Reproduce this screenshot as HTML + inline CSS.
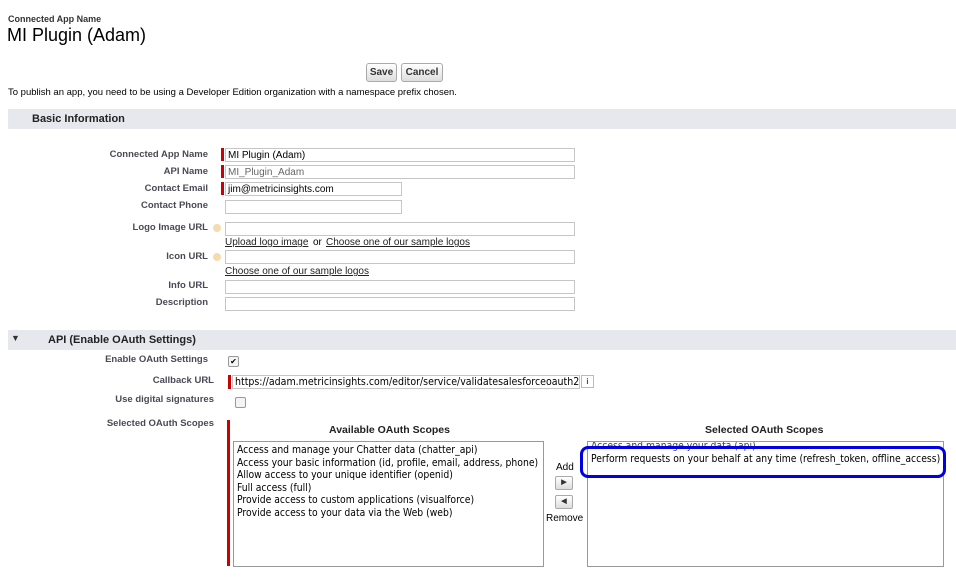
<!DOCTYPE html>
<html><head><style>
body{margin:0;width:956px;height:588px;background:#fff;font-family:"Liberation Sans",Arial,sans-serif;position:relative;overflow:hidden;color:#000}
.a{position:absolute;white-space:nowrap}
.lbl{position:absolute;font-size:9.5px;font-weight:bold;color:#4a4a56;text-align:right;white-space:nowrap}
.in{position:absolute;border:1px solid #c6c6c6;background:#fff;height:12px;font-size:10px;line-height:13px;padding-left:2px;box-sizing:content-box}
.red{position:absolute;background:#c00;width:3px}
.bar{position:absolute;left:8px;right:0;background:#e6e8ee;height:20px}
.lnk{position:absolute;font-size:10px;text-decoration:underline;color:#222;white-space:nowrap}
.btn{position:absolute;border:1px solid #aaa;border-radius:3px;background:linear-gradient(#fff,#ddd);font-size:10px;font-weight:bold;color:#333;text-align:center;line-height:17px;height:17px}
.cb{position:absolute;width:9px;height:9px;border:1px solid #999;border-radius:2px;background:#f4f4f4;font-size:8px;line-height:9px;text-align:center}
.box{position:absolute;border:1px solid #999;background:#fff;font-size:10.3px;line-height:12.6px;padding:2px 3px;box-sizing:border-box;font-family:"DejaVu Sans Condensed","Liberation Sans",sans-serif;white-space:nowrap;overflow:hidden}
.hint{position:absolute;width:8px;height:8px;border-radius:50%;background:#f3dcae}
</style></head><body>
<div class="a" style="left:8px;top:14px;font-size:9px;font-weight:bold;color:#333">Connected App Name</div>
<div class="a" style="left:7px;top:25px;font-size:18px;color:#000">MI Plugin (Adam)</div>
<div class="btn" style="left:366px;top:63px;width:29px">Save</div>
<div class="btn" style="left:401px;top:63px;width:40px">Cancel</div>
<div class="a" style="left:8px;top:87px;font-size:9.5px">To publish an app, you need to be using a Developer Edition organization with a namespace prefix chosen.</div>
<div class="bar" style="top:109px"></div>
<div class="a" style="left:32px;top:113px;font-size:11px;font-weight:bold;color:#222">Basic Information</div>

<div class="lbl" style="right:748px;top:149px">Connected App Name</div>
<div class="red" style="left:221px;top:148px;height:13px"></div>
<div class="in" style="left:225px;top:148px;width:346px">MI Plugin (Adam)</div>
<div class="lbl" style="right:748px;top:166px">API Name</div>
<div class="red" style="left:221px;top:165px;height:13px"></div>
<div class="in" style="left:225px;top:165px;width:346px;color:#666">MI_Plugin_Adam</div>
<div class="lbl" style="right:748px;top:183px">Contact Email</div>
<div class="red" style="left:221px;top:182px;height:13px"></div>
<div class="in" style="left:225px;top:182px;width:173px">jim@metricinsights.com</div>
<div class="lbl" style="right:748px;top:200px">Contact Phone</div>
<div class="in" style="left:225px;top:200px;width:173px"></div>
<div class="lbl" style="right:748px;top:222px">Logo Image URL</div>
<div class="hint" style="left:213px;top:224px"></div>
<div class="in" style="left:225px;top:222px;width:346px"></div>
<div class="lnk" style="left:225px;top:237px">Upload logo image</div>
<div class="a" style="left:313px;top:237px;font-size:10px">or</div>
<div class="lnk" style="left:326px;top:237px">Choose one of our sample logos</div>
<div class="lbl" style="right:748px;top:251px">Icon URL</div>
<div class="hint" style="left:213px;top:253px"></div>
<div class="in" style="left:225px;top:250px;width:346px"></div>
<div class="lnk" style="left:225px;top:266px">Choose one of our sample logos</div>
<div class="lbl" style="right:748px;top:280px">Info URL</div>
<div class="in" style="left:225px;top:280px;width:346px"></div>
<div class="lbl" style="right:748px;top:297px">Description</div>
<div class="in" style="left:225px;top:297px;width:346px"></div>

<div class="bar" style="top:330px"></div>
<div class="a" style="left:11px;top:333px;font-size:9px;color:#333">▼</div>
<div class="a" style="left:48px;top:334px;font-size:11px;font-weight:bold;color:#222">API (Enable OAuth Settings)</div>
<div class="lbl" style="right:748px;top:354px">Enable OAuth Settings</div>
<div class="cb" style="left:228px;top:356px">✔</div>
<div class="lbl" style="right:742px;top:375px">Callback URL</div>
<div class="red" style="left:228px;top:375px;height:14px"></div>
<div class="in" style="left:232px;top:375px;width:344px;font-family:'DejaVu Sans Condensed','Liberation Sans',sans-serif;font-size:10.5px;overflow:hidden">https://adam.metricinsights.com/editor/service/validatesalesforceoauth2</div>
<div class="a" style="left:581px;top:375px;width:11px;height:11px;border:1px solid #bbb;font-size:8px;color:#15c;text-align:center;line-height:11px;font-weight:bold">i</div>
<div class="lbl" style="right:742px;top:394px">Use digital signatures</div>
<div class="cb" style="left:235px;top:397px"></div>
<div class="lbl" style="right:742px;top:418px">Selected OAuth Scopes</div>
<div class="red" style="left:227px;top:420px;height:146px"></div>
<div class="a" style="left:329px;top:424px;font-size:10.5px;font-weight:bold;color:#222">Available OAuth Scopes</div>
<div class="a" style="left:705px;top:424px;font-size:10.5px;font-weight:bold;color:#222">Selected OAuth Scopes</div>
<div class="box" style="left:233px;top:441px;width:311px;height:126px">Access and manage your Chatter data (chatter_api)<br>Access your basic information (id, profile, email, address, phone)<br>Allow access to your unique identifier (openid)<br>Full access (full)<br>Provide access to custom applications (visualforce)<br>Provide access to your data via the Web (web)</div>
<div class="a" style="left:556px;top:462px;font-size:10px">Add</div>
<div class="btn" style="left:555px;top:476px;width:16px;height:12px;line-height:12px;font-size:7px;border-radius:2px">▶</div>
<div class="btn" style="left:555px;top:495px;width:16px;height:12px;line-height:12px;font-size:7px;border-radius:2px">◀</div>
<div class="a" style="left:546px;top:513px;font-size:10px">Remove</div>
<div class="box" style="left:587px;top:441px;width:357px;height:126px"><div style="margin-top:-4px;color:#444">Access and manage your data (api)</div>Perform requests on your behalf at any time (refresh_token, offline_access)</div>
<div class="a" style="left:580px;top:446px;width:360px;height:26px;border:3.5px solid #0000e6;border-radius:8px"></div>
</body></html>
